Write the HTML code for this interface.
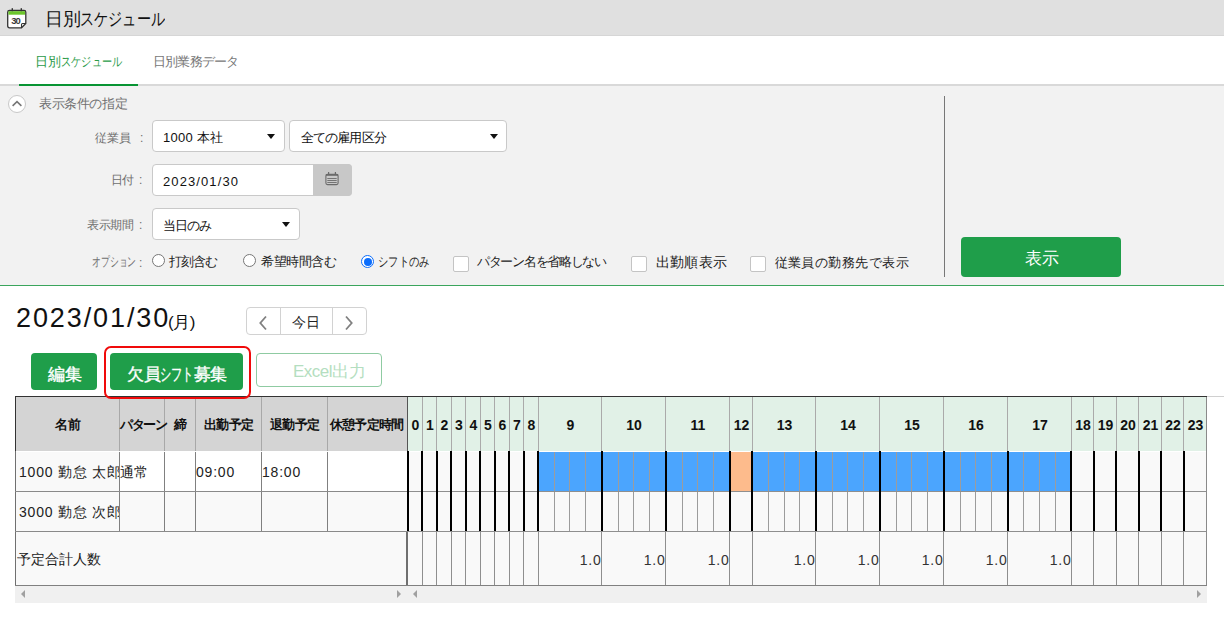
<!DOCTYPE html>
<html><head><meta charset="utf-8">
<style>
html,body{margin:0;padding:0;}
body{width:1224px;height:617px;overflow:hidden;position:relative;background:#fff;font-family:"Liberation Sans",sans-serif;color:#222;}
div,span,svg{position:absolute;box-sizing:border-box;}
.t{white-space:nowrap;line-height:1;}
.hn{top:417px;height:16px;line-height:16px;text-align:center;font-weight:bold;font-size:14px;color:#111;white-space:nowrap;}
.tv{top:552px;width:40px;height:16px;line-height:16px;text-align:right;font-size:14px;color:#333;letter-spacing:0.8px;}
.sel{background:#fff;border:1px solid #c9c9c9;border-radius:4px;}
.arr{width:0;height:0;border-left:4px solid transparent;border-right:4px solid transparent;border-top:5px solid #111;}
.lbl{font-size:12px;color:#6f6f6f;white-space:nowrap;line-height:1;text-align:right;}
.opt{font-size:13px;color:#222;white-space:nowrap;line-height:1;}
.rad{width:13px;height:13px;border:1px solid #777;border-radius:50%;background:#fff;}
.chk{width:16px;height:16px;border:1px solid #c4c4c4;border-radius:2px;background:#fff;}
.gbtn{background:#1f9e4a;border-radius:4px;color:#fff;text-align:center;}
.th{font-weight:bold;font-size:13px;color:#111;text-align:center;white-space:nowrap;line-height:16px;}
.td{font-size:14px;color:#222;white-space:nowrap;line-height:16px;}
</style></head>
<body>
<!-- top header band -->
<div style="left:0;top:0;width:1224px;height:36px;background:#e0e0e0;border-bottom:1px solid #d6d6d6;"></div>
<svg style="left:6px;top:7px" width="22" height="23" viewBox="0 0 22 23">
  <path d="M3.5 3.5 H18 Q19.8 3.5 19.8 5.3 V16.5 L15.5 20.8 H3.5 Q1.7 20.8 1.7 19 V5.3 Q1.7 3.5 3.5 3.5 Z" fill="#fff" stroke="#333" stroke-width="1.3"/>
  <rect x="2.4" y="4.2" width="16.7" height="3.5" fill="#6cc62b"/>
  <rect x="5.6" y="1.2" width="1.4" height="3" fill="#333"/>
  <rect x="14.6" y="1.2" width="1.4" height="3" fill="#333"/>
  <text x="5.2" y="16.8" font-size="9.5" font-weight="bold" font-family="Liberation Sans" fill="#3a3a3a" letter-spacing="-0.9">30</text>
  <path d="M15.5 20.8 V17.5 Q15.5 16.5 16.5 16.5 H19.8" stroke="#333" stroke-width="1.1" fill="none"/>
</svg>
<span class="t" style="left:45px;top:10px;font-size:18px;color:#111;letter-spacing:-0.3px;">日別<span style="position:static;display:inline-block;letter-spacing:0;transform:scaleX(0.785);transform-origin:0 0;">スケジュール</span></span>

<!-- tabs -->
<span class="t" style="left:35px;top:55px;font-size:13px;color:#2b9a48;letter-spacing:0px;">日別<span style="position:static;display:inline-block;letter-spacing:0;transform:scaleX(0.785);transform-origin:0 0;">スケジュール</span></span>
<span class="t" style="left:153px;top:55px;font-size:13px;color:#777;letter-spacing:-0.8px;">日別業務データ</span>
<div style="left:0;top:84px;width:1224px;height:2px;background:#d9d9d9;"></div>
<div style="left:19px;top:84px;width:119px;height:2px;background:#089433;"></div>

<!-- filter panel -->
<div style="left:0;top:86px;width:1224px;height:199px;background:#f2f2f2;"></div>
<div style="left:0;top:285px;width:1224px;height:1px;background:#3aa55c;"></div>
<div style="left:8px;top:95px;width:18px;height:18px;border:1px solid #c8c8c8;border-radius:50%;background:#fff;"></div>
<svg style="left:8px;top:95px" width="18" height="18" viewBox="0 0 18 18"><path d="M4.6 10.9 L9 6.7 L13.4 10.9" stroke="#777" stroke-width="1.6" fill="none"/></svg>
<span class="t" style="left:39px;top:97px;font-size:13px;color:#707070;letter-spacing:-0.4px;">表示条件の指定</span>

<span class="lbl" style="left:95px;top:132px;letter-spacing:0px;">従業員</span>
<span class="lbl" style="left:140px;top:132px;">:</span>
<div class="sel" style="left:152px;top:120px;width:133px;height:32px;"></div>
<span class="t" style="left:163px;top:131px;font-size:13px;color:#111;letter-spacing:0.3px;">1000 本社</span>
<div class="arr" style="left:267px;top:134px;"></div>
<div class="sel" style="left:289px;top:120px;width:218px;height:32px;"></div>
<span class="t" style="left:301px;top:131px;font-size:13px;color:#111;letter-spacing:-0.9px;">全ての雇用区分</span>
<div class="arr" style="left:490px;top:134px;"></div>

<span class="lbl" style="left:111px;top:174px;letter-spacing:-0.8px;">日付</span>
<span class="lbl" style="left:139px;top:174px;">:</span>
<div class="sel" style="left:152px;top:164px;width:200px;height:32px;"></div>
<div style="left:313px;top:164px;width:39px;height:32px;background:#c8c8c8;border-radius:0 4px 4px 0;"></div>
<svg style="left:324px;top:171px" width="16" height="15" viewBox="0 0 16 15">
  <rect x="1.9" y="3.4" width="12.2" height="10.2" rx="1.6" fill="none" stroke="#6a6a6a" stroke-width="1.1"/>
  <rect x="1.9" y="3" width="12.2" height="1.8" fill="#6a6a6a"/>
  <rect x="4" y="1" width="1.2" height="2.5" fill="#6a6a6a"/>
  <rect x="10.8" y="1" width="1.2" height="2.5" fill="#6a6a6a"/>
  <rect x="3.3" y="7" width="9.4" height="0.9" fill="#6a6a6a"/>
  <rect x="3.3" y="9.1" width="9.4" height="0.9" fill="#6a6a6a"/>
  <rect x="3.3" y="11" width="9.4" height="0.9" fill="#6a6a6a"/>
</svg>
<span class="t" style="left:163px;top:175px;font-size:13px;color:#111;letter-spacing:1.1px;">2023/01/30</span>

<span class="lbl" style="left:87px;top:219px;letter-spacing:-0.5px;">表示期間</span>
<span class="lbl" style="left:139px;top:219px;">:</span>
<div class="sel" style="left:152px;top:208px;width:148px;height:32px;"></div>
<span class="t" style="left:163px;top:219px;font-size:13px;color:#111;letter-spacing:-1px;">当日のみ</span>
<div class="arr" style="left:282px;top:222px;"></div>

<span class="lbl" style="left:92px;top:256px;font-size:12.5px;letter-spacing:0;transform:scaleX(0.68);transform-origin:0 0;">オプション</span>
<span class="lbl" style="left:139px;top:257px;">:</span>
<div class="rad" style="left:152px;top:254px;"></div>
<span class="opt" style="left:169px;top:255px;letter-spacing:-0.9px;">打刻含む</span>
<div class="rad" style="left:243px;top:254px;"></div>
<span class="opt" style="left:261px;top:255px;letter-spacing:-0.5px;">希望時間含む</span>
<div class="rad" style="left:361px;top:255px;border-color:#0b6dfc;"></div>
<div style="left:363.5px;top:257.5px;width:8px;height:8px;border-radius:50%;background:#0b6dfc;"></div>
<span class="opt" style="left:378px;top:255px;letter-spacing:0;transform:scaleX(0.79);transform-origin:0 0;">シフトのみ</span>
<div class="chk" style="left:453px;top:256px;"></div>
<span class="opt" style="left:477px;top:255px;letter-spacing:-1.3px;">パターン名を省略しない</span>
<div class="chk" style="left:631px;top:256px;"></div>
<span class="opt" style="left:656px;top:255.5px;font-size:13.6px;letter-spacing:0.2px;">出勤順表示</span>
<div class="chk" style="left:750px;top:256px;"></div>
<span class="opt" style="left:774.5px;top:255.5px;font-size:13.3px;letter-spacing:0.45px;">従業員の勤務先で表示</span>

<div style="left:944px;top:96px;width:1px;height:181px;background:#777;"></div>
<div class="gbtn" style="left:961px;top:237px;width:160px;height:40px;"></div>
<span class="t" style="left:1024.5px;top:249.5px;font-size:16.5px;color:#fff;">表示</span>

<!-- date heading -->
<span class="t" style="left:16px;top:305px;font-size:27px;color:#111;letter-spacing:1.9px;">2023/01/30</span>
<span class="t" style="left:168px;top:314px;font-size:17px;color:#111;letter-spacing:-0.5px;">(月)</span>

<div style="left:246px;top:307px;width:121px;height:28px;border:1px solid #d2d2d2;border-radius:4px;background:#fff;"></div>
<div style="left:280px;top:308px;width:1px;height:26px;background:#d2d2d2;"></div>
<div style="left:332px;top:308px;width:1px;height:26px;background:#d2d2d2;"></div>
<svg style="left:256px;top:314px" width="14" height="18" viewBox="0 0 14 18"><path d="M10 2.5 L4.3 9 L10 15.5" stroke="#808080" stroke-width="1.8" fill="none"/></svg>
<svg style="left:342px;top:314px" width="14" height="18" viewBox="0 0 14 18"><path d="M4 2.5 L9.7 9 L4 15.5" stroke="#808080" stroke-width="1.8" fill="none"/></svg>
<span class="t" style="left:292px;top:315px;font-size:14px;color:#222;">今日</span>

<!-- action buttons -->
<div class="gbtn" style="left:31px;top:353px;width:66px;height:37px;"></div>
<span class="t" style="left:48px;top:366px;font-size:17px;color:#fff;-webkit-text-stroke:0.35px #fff;">編集</span>
<div style="left:104px;top:346px;width:147px;height:53px;border:2px solid #f00a0a;border-radius:7px;z-index:5;"></div>
<div class="gbtn" style="left:110px;top:353px;width:133px;height:37px;"></div>
<span class="t" style="left:127px;top:366px;font-size:17px;color:#fff;-webkit-text-stroke:0.35px #fff;letter-spacing:-0.5px;">欠員<span style="position:static;display:inline-block;letter-spacing:0;transform:scaleX(0.66);transform-origin:0 0;margin-right:-17.3px;">シフト</span><span style="position:static;letter-spacing:-0.5px;">募集</span></span>
<div style="left:256px;top:353px;width:126px;height:34px;border:1px solid #8fcba2;border-radius:4px;background:#fff;"></div>
<span class="t" style="left:293px;top:363px;font-size:17px;color:#b4dec0;letter-spacing:-0.5px;">Excel出力</span>

<!-- left table -->
<div style="left:1206px;top:396px;width:18px;height:1px;background:#d0d0d0;"></div>
<div style="left:15px;top:396px;width:1192px;height:1px;background:#333;"></div>
<div style="left:15px;top:397px;width:393px;height:54px;background:#d4d4d4;"></div>
<div style="left:15px;top:452px;width:393px;height:133px;background:#f9f9f9;"></div>
<div style="left:120px;top:452px;width:287px;height:39px;background:#fff;"></div>
<div style="left:15px;top:396px;width:1px;height:190px;background:#707070;"></div><div style="left:15px;top:396px;width:1px;height:55px;background:#333;"></div>
<div style="left:15px;top:585px;width:1192px;height:1px;background:#808080;"></div>
<div style="left:1206px;top:397px;width:1px;height:188px;background:#8a8a8a;"></div>
<div style="left:407px;top:397px;width:1px;height:188px;background:#555;"></div><div style="left:406px;top:532px;width:2px;height:53px;background:#707070;"></div>
<!-- column lines -->
<div style="left:119px;top:397px;width:1px;height:54px;background:#a8a8a8;"></div>
<div style="left:164px;top:397px;width:1px;height:54px;background:#a8a8a8;"></div>
<div style="left:195px;top:397px;width:1px;height:54px;background:#a8a8a8;"></div>
<div style="left:261px;top:397px;width:1px;height:54px;background:#a8a8a8;"></div>
<div style="left:327px;top:397px;width:1px;height:54px;background:#a8a8a8;"></div>
<div style="left:119px;top:452px;width:1px;height:79px;background:#808080;"></div>
<div style="left:164px;top:452px;width:1px;height:79px;background:#808080;"></div>
<div style="left:195px;top:452px;width:1px;height:79px;background:#808080;"></div>
<div style="left:261px;top:452px;width:1px;height:79px;background:#808080;"></div>
<div style="left:327px;top:452px;width:1px;height:79px;background:#808080;"></div>
<div style="left:15px;top:491px;width:393px;height:1px;background:#8a8a8a;"></div>
<div style="left:15px;top:531px;width:393px;height:1px;background:#8a8a8a;"></div>

<span class="th" style="left:16px;top:417px;width:103px;">名前</span>
<span class="th" style="left:120px;top:417px;width:44px;letter-spacing:-1.5px;">パターン</span>
<span class="th" style="left:165px;top:417px;width:30px;">締</span>
<span class="th" style="left:196px;top:417px;width:65px;letter-spacing:-0.5px;">出勤予定</span>
<span class="th" style="left:262px;top:417px;width:65px;letter-spacing:-0.5px;">退勤予定</span>
<span class="th" style="left:327px;top:417px;width:79px;letter-spacing:-0.75px;">休憩予定時間</span>

<span class="td" style="left:19px;top:464px;letter-spacing:0.8px;width:100px;overflow:hidden;">1000 勤怠 太郎</span>
<span class="td" style="left:120px;top:464px;">通常</span>
<span class="td" style="left:196px;top:464px;letter-spacing:0.8px;">09:00</span>
<span class="td" style="left:262px;top:464px;letter-spacing:0.8px;">18:00</span>
<span class="td" style="left:19px;top:504px;letter-spacing:0.8px;width:100px;overflow:hidden;">3000 勤怠 次郎</span>
<span class="td" style="left:17px;top:551px;">予定合計人数</span>

<div style="left:408px;top:397px;width:798px;height:54px;background:#e1f1e7"></div>
<div style="left:408px;top:452px;width:798px;height:39px;background:#f9f9f9"></div>
<div style="left:408px;top:492px;width:798px;height:39px;background:#f9f9f9"></div>
<div style="left:408px;top:532px;width:798px;height:53px;background:#f9f9f9"></div>
<div style="left:539px;top:452px;width:190px;height:39px;background:#4ba5fe"></div>
<div style="left:730px;top:452px;width:22px;height:39px;background:#fdbb8c"></div>
<div style="left:752px;top:452px;width:319px;height:39px;background:#4ba5fe"></div>
<div style="left:554px;top:452px;width:1px;height:79px;background:#9c9c9c"></div>
<div style="left:569px;top:452px;width:1px;height:79px;background:#9c9c9c"></div>
<div style="left:585px;top:452px;width:1px;height:79px;background:#9c9c9c"></div>
<div style="left:618px;top:452px;width:1px;height:79px;background:#9c9c9c"></div>
<div style="left:633px;top:452px;width:1px;height:79px;background:#9c9c9c"></div>
<div style="left:649px;top:452px;width:1px;height:79px;background:#9c9c9c"></div>
<div style="left:682px;top:452px;width:1px;height:79px;background:#9c9c9c"></div>
<div style="left:697px;top:452px;width:1px;height:79px;background:#9c9c9c"></div>
<div style="left:713px;top:452px;width:1px;height:79px;background:#9c9c9c"></div>
<div style="left:768px;top:452px;width:1px;height:79px;background:#9c9c9c"></div>
<div style="left:784px;top:452px;width:1px;height:79px;background:#9c9c9c"></div>
<div style="left:799px;top:452px;width:1px;height:79px;background:#9c9c9c"></div>
<div style="left:832px;top:452px;width:1px;height:79px;background:#9c9c9c"></div>
<div style="left:847px;top:452px;width:1px;height:79px;background:#9c9c9c"></div>
<div style="left:863px;top:452px;width:1px;height:79px;background:#9c9c9c"></div>
<div style="left:896px;top:452px;width:1px;height:79px;background:#9c9c9c"></div>
<div style="left:911px;top:452px;width:1px;height:79px;background:#9c9c9c"></div>
<div style="left:927px;top:452px;width:1px;height:79px;background:#9c9c9c"></div>
<div style="left:960px;top:452px;width:1px;height:79px;background:#9c9c9c"></div>
<div style="left:975px;top:452px;width:1px;height:79px;background:#9c9c9c"></div>
<div style="left:991px;top:452px;width:1px;height:79px;background:#9c9c9c"></div>
<div style="left:1023px;top:452px;width:1px;height:79px;background:#9c9c9c"></div>
<div style="left:1039px;top:452px;width:1px;height:79px;background:#9c9c9c"></div>
<div style="left:1055px;top:452px;width:1px;height:79px;background:#9c9c9c"></div>
<div style="left:422px;top:397px;width:1px;height:54px;background:#aaaaaa"></div>
<div style="left:422px;top:532px;width:1px;height:53px;background:#8f8f8f"></div>
<div style="left:436px;top:397px;width:1px;height:54px;background:#aaaaaa"></div>
<div style="left:436px;top:532px;width:1px;height:53px;background:#8f8f8f"></div>
<div style="left:451px;top:397px;width:1px;height:54px;background:#aaaaaa"></div>
<div style="left:451px;top:532px;width:1px;height:53px;background:#8f8f8f"></div>
<div style="left:465px;top:397px;width:1px;height:54px;background:#aaaaaa"></div>
<div style="left:465px;top:532px;width:1px;height:53px;background:#8f8f8f"></div>
<div style="left:480px;top:397px;width:1px;height:54px;background:#aaaaaa"></div>
<div style="left:480px;top:532px;width:1px;height:53px;background:#8f8f8f"></div>
<div style="left:494px;top:397px;width:1px;height:54px;background:#aaaaaa"></div>
<div style="left:494px;top:532px;width:1px;height:53px;background:#8f8f8f"></div>
<div style="left:509px;top:397px;width:1px;height:54px;background:#aaaaaa"></div>
<div style="left:509px;top:532px;width:1px;height:53px;background:#8f8f8f"></div>
<div style="left:523px;top:397px;width:1px;height:54px;background:#aaaaaa"></div>
<div style="left:523px;top:532px;width:1px;height:53px;background:#8f8f8f"></div>
<div style="left:538px;top:397px;width:1px;height:54px;background:#aaaaaa"></div>
<div style="left:538px;top:532px;width:1px;height:53px;background:#8f8f8f"></div>
<div style="left:601px;top:397px;width:1px;height:54px;background:#aaaaaa"></div>
<div style="left:601px;top:532px;width:1px;height:53px;background:#8f8f8f"></div>
<div style="left:665px;top:397px;width:1px;height:54px;background:#aaaaaa"></div>
<div style="left:665px;top:532px;width:1px;height:53px;background:#8f8f8f"></div>
<div style="left:729px;top:397px;width:1px;height:54px;background:#aaaaaa"></div>
<div style="left:729px;top:532px;width:1px;height:53px;background:#8f8f8f"></div>
<div style="left:752px;top:397px;width:1px;height:54px;background:#aaaaaa"></div>
<div style="left:752px;top:532px;width:1px;height:53px;background:#8f8f8f"></div>
<div style="left:815px;top:397px;width:1px;height:54px;background:#aaaaaa"></div>
<div style="left:815px;top:532px;width:1px;height:53px;background:#8f8f8f"></div>
<div style="left:879px;top:397px;width:1px;height:54px;background:#aaaaaa"></div>
<div style="left:879px;top:532px;width:1px;height:53px;background:#8f8f8f"></div>
<div style="left:943px;top:397px;width:1px;height:54px;background:#aaaaaa"></div>
<div style="left:943px;top:532px;width:1px;height:53px;background:#8f8f8f"></div>
<div style="left:1007px;top:397px;width:1px;height:54px;background:#aaaaaa"></div>
<div style="left:1007px;top:532px;width:1px;height:53px;background:#8f8f8f"></div>
<div style="left:1071px;top:397px;width:1px;height:54px;background:#aaaaaa"></div>
<div style="left:1071px;top:532px;width:1px;height:53px;background:#8f8f8f"></div>
<div style="left:1093px;top:397px;width:1px;height:54px;background:#aaaaaa"></div>
<div style="left:1093px;top:532px;width:1px;height:53px;background:#8f8f8f"></div>
<div style="left:1116px;top:397px;width:1px;height:54px;background:#aaaaaa"></div>
<div style="left:1116px;top:532px;width:1px;height:53px;background:#8f8f8f"></div>
<div style="left:1138px;top:397px;width:1px;height:54px;background:#aaaaaa"></div>
<div style="left:1138px;top:532px;width:1px;height:53px;background:#8f8f8f"></div>
<div style="left:1161px;top:397px;width:1px;height:54px;background:#aaaaaa"></div>
<div style="left:1161px;top:532px;width:1px;height:53px;background:#8f8f8f"></div>
<div style="left:1183px;top:397px;width:1px;height:54px;background:#aaaaaa"></div>
<div style="left:1183px;top:532px;width:1px;height:53px;background:#8f8f8f"></div>
<div style="left:408px;top:491px;width:798px;height:1px;background:#8f8f8f"></div>
<div style="left:408px;top:531px;width:798px;height:1px;background:#8f8f8f"></div>
<div style="left:407px;top:451px;width:2px;height:80px;background:#000"></div>
<div style="left:421px;top:451px;width:2px;height:80px;background:#000"></div>
<div style="left:436px;top:451px;width:2px;height:80px;background:#000"></div>
<div style="left:450px;top:451px;width:2px;height:80px;background:#000"></div>
<div style="left:465px;top:451px;width:2px;height:80px;background:#000"></div>
<div style="left:479px;top:451px;width:2px;height:80px;background:#000"></div>
<div style="left:494px;top:451px;width:2px;height:80px;background:#000"></div>
<div style="left:508px;top:451px;width:2px;height:80px;background:#000"></div>
<div style="left:523px;top:451px;width:2px;height:80px;background:#000"></div>
<div style="left:537px;top:451px;width:2px;height:80px;background:#000"></div>
<div style="left:601px;top:451px;width:2px;height:80px;background:#000"></div>
<div style="left:665px;top:451px;width:2px;height:80px;background:#000"></div>
<div style="left:729px;top:451px;width:2px;height:80px;background:#000"></div>
<div style="left:751px;top:451px;width:2px;height:80px;background:#000"></div>
<div style="left:815px;top:451px;width:2px;height:80px;background:#000"></div>
<div style="left:879px;top:451px;width:2px;height:80px;background:#000"></div>
<div style="left:943px;top:451px;width:2px;height:80px;background:#000"></div>
<div style="left:1007px;top:451px;width:2px;height:80px;background:#000"></div>
<div style="left:1070px;top:451px;width:2px;height:80px;background:#000"></div>
<div style="left:1093px;top:451px;width:2px;height:80px;background:#000"></div>
<div style="left:1115px;top:451px;width:2px;height:80px;background:#000"></div>
<div style="left:1138px;top:451px;width:2px;height:80px;background:#000"></div>
<div style="left:1160px;top:451px;width:2px;height:80px;background:#000"></div>
<div style="left:1183px;top:451px;width:2px;height:80px;background:#000"></div>
<span class="hn" style="left:408px;width:15px">0</span>
<span class="hn" style="left:423px;width:14px">1</span>
<span class="hn" style="left:437px;width:15px">2</span>
<span class="hn" style="left:452px;width:14px">3</span>
<span class="hn" style="left:466px;width:15px">4</span>
<span class="hn" style="left:481px;width:14px">5</span>
<span class="hn" style="left:495px;width:15px">6</span>
<span class="hn" style="left:510px;width:14px">7</span>
<span class="hn" style="left:524px;width:15px">8</span>
<span class="hn" style="left:539px;width:63px">9</span>
<span class="hn" style="left:602px;width:64px">10</span>
<span class="hn" style="left:666px;width:64px">11</span>
<span class="hn" style="left:730px;width:23px">12</span>
<span class="hn" style="left:753px;width:63px">13</span>
<span class="hn" style="left:816px;width:64px">14</span>
<span class="hn" style="left:880px;width:64px">15</span>
<span class="hn" style="left:944px;width:64px">16</span>
<span class="hn" style="left:1008px;width:64px">17</span>
<span class="hn" style="left:1072px;width:22px">18</span>
<span class="hn" style="left:1094px;width:23px">19</span>
<span class="hn" style="left:1117px;width:22px">20</span>
<span class="hn" style="left:1139px;width:23px">21</span>
<span class="hn" style="left:1162px;width:22px">22</span>
<span class="hn" style="left:1184px;width:23px">23</span>
<span class="tv" style="left:561.5px">1.0</span>
<span class="tv" style="left:625.5px">1.0</span>
<span class="tv" style="left:689.5px">1.0</span>
<span class="tv" style="left:775.5px">1.0</span>
<span class="tv" style="left:839.5px">1.0</span>
<span class="tv" style="left:903.5px">1.0</span>
<span class="tv" style="left:967.5px">1.0</span>
<span class="tv" style="left:1031.5px">1.0</span>

<!-- scrollbars -->
<div style="left:15px;top:586px;width:1192px;height:17px;background:#f0f0f0;"></div>
<div style="left:21px;top:590px;width:0;height:0;border-top:4px solid transparent;border-bottom:4px solid transparent;border-right:4px solid #a0a0a0;"></div>
<div style="left:397px;top:590px;width:0;height:0;border-top:4px solid transparent;border-bottom:4px solid transparent;border-left:4px solid #a0a0a0;"></div>
<div style="left:413px;top:590px;width:0;height:0;border-top:4px solid transparent;border-bottom:4px solid transparent;border-right:4px solid #a0a0a0;"></div>
<div style="left:1197px;top:590px;width:0;height:0;border-top:4px solid transparent;border-bottom:4px solid transparent;border-left:4px solid #a0a0a0;"></div>
</body></html>
